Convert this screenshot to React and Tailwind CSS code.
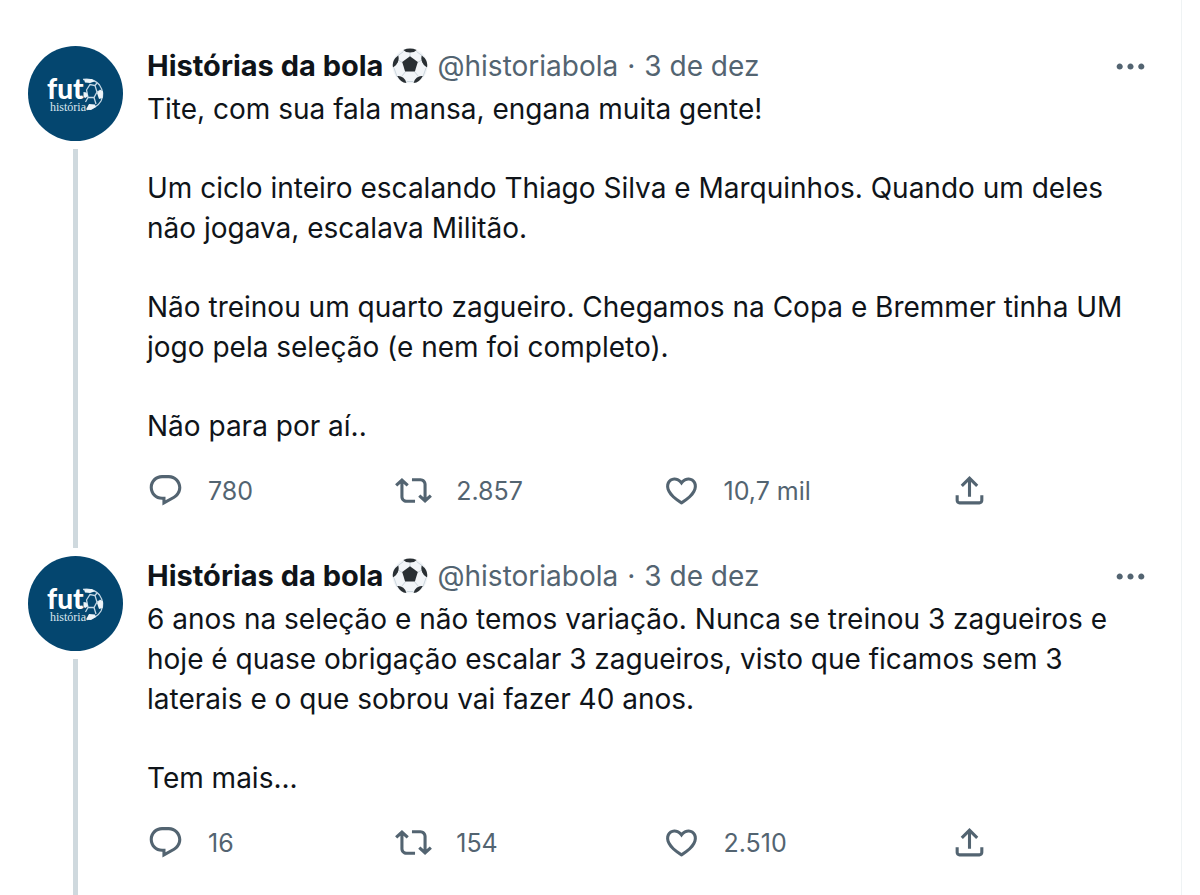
import React from "react";

const posts = [
  {
    id: 1,
    date: "3 de dez",
    text: [
      "Tite, com sua fala mansa, engana muita gente!",
      "Um ciclo inteiro escalando Thiago Silva e Marquinhos. Quando um deles não jogava, escalava Militão.",
      "Não treinou um quarto zagueiro. Chegamos na Copa e Bremmer tinha UM jogo pela seleção (e nem foi completo).",
      "Não para por aí..",
    ],
    replies: "780",
    retweets: "2.857",
    likes: "10,7 mil",
  },
  {
    id: 2,
    date: "3 de dez",
    text: [
      "6 anos na seleção e não temos variação. Nunca se treinou 3 zagueiros e hoje é quase obrigação escalar 3 zagueiros, visto que ficamos sem 3 laterais e o que sobrou vai fazer 40 anos.",
      "Tem mais...",
    ],
    replies: "16",
    retweets: "154",
    likes: "2.510",
  },
];

const icons = {
  reply:
    "M1.751 10c0-4.42 3.584-8 8.005-8h4.366c4.49 0 8.129 3.64 8.129 8.13 0 2.96-1.607 5.68-4.196 7.11l-8.054 4.46v-3.69h-.067c-4.49.1-8.183-3.51-8.183-8.01zm8.005-6c-3.317 0-6.005 2.69-6.005 6 0 3.37 2.77 6.08 6.138 6.01l.351-.01h1.761v2.3l5.087-2.81c1.951-1.08 3.163-3.13 3.163-5.36 0-3.39-2.744-6.13-6.129-6.13H9.756z",
  retweet:
    "M4.5 3.88l4.432 4.14-1.364 1.46L5.5 7.55V16c0 1.1.896 2 2 2H13v2H7.5c-2.209 0-4-1.79-4-4V7.55L1.432 9.48.068 8.02 4.5 3.88zM16.5 6H11V4h5.5c2.209 0 4 1.79 4 4v8.45l2.068-1.93 1.364 1.46-4.432 4.14-4.432-4.14 1.364-1.46 2.068 1.93V8c0-1.1-.896-2-2-2z",
  like: "M16.697 5.5c-1.222-.06-2.679.51-3.89 2.16l-.805 1.09-.806-1.09C9.984 6.01 8.526 5.44 7.304 5.5c-1.243.07-2.349.78-2.91 1.91-.552 1.12-.633 2.78.479 4.82 1.074 1.97 3.257 4.27 7.129 6.61 3.87-2.34 6.052-4.64 7.126-6.61 1.111-2.04 1.03-3.7.477-4.82-.561-1.13-1.666-1.84-2.908-1.91zm4.187 7.69c-1.351 2.48-4.001 5.12-8.379 7.67l-.503.3-.504-.3c-4.379-2.55-7.029-5.19-8.382-7.67-1.36-2.5-1.41-4.86-.514-6.67.887-1.79 2.647-2.91 4.601-3.01 1.651-.09 3.368.56 4.798 2.01 1.429-1.45 3.146-2.1 4.796-2.01 1.954.1 3.714 1.22 4.601 3.01.896 1.81.846 4.17-.514 6.67z",
  share:
    "M12 2.59l5.7 5.7-1.41 1.42L13 6.41V16h-2V6.41l-3.3 3.3-1.41-1.42L12 2.59zM21 15l-.02 3.51c0 1.38-1.12 2.49-2.5 2.49H5.5C4.11 21 3 19.88 3 18.5V15h2v3.5c0 .28.22.5.5.5h12.98c.28 0 .5-.22.5-.5L19 15h2z",
  more: "M3 12c0-1.1.9-2 2-2s2 .9 2 2-.9 2-2 2-2-.9-2-2zm9 2c1.1 0 2-.9 2-2s-.9-2-2-2-2 .9-2 2 .9 2 2 2zm7 0c1.1 0 2-.9 2-2s-.9-2-2-2-2 .9-2 2 .9 2 2 2z",
};

const Icon = ({ name }) => (
  <svg viewBox="0 0 24 24" className="w-[37px] h-[37px] shrink-0 fill-current" aria-hidden="true">
    <path d={icons[name]} />
  </svg>
);

const SoccerBall = () => (
  <svg viewBox="0 0 36 36" className="w-9 h-9 shrink-0" aria-hidden="true">
    <circle cx="18" cy="18" r="17.6" fill="#f2f5f8" />
    <path
      d="M18 9V4M25.5 14.5L30 12M22.7 23.8L26 28M13.3 23.8L10 28M10.5 14.5L6 12M11.5 3.5L5.5 8M24.5 3.5L30.5 8M2 20L5 28.5M34 20L31 28.5M14.5 33.5H21.5"
      stroke="#ccd6dd"
      strokeWidth="1"
      fill="none"
    />
    <g fill="#292f33">
      <path d="M18 8.3L25.8 14.1L22.9 23.6H13.1L10.2 14.1Z" />
      <path d="M11.3 2Q18-.8 24.7 2Q22.5 4.6 18 4.6Q13.5 4.6 11.3 2Z" />
      <path d="M6.2 7.6Q7.3 10.5 5.8 14.3Q4.3 18 1 19.5Q-.5 12.5 6.2 7.6Z" />
      <path d="M29.8 7.6Q28.7 10.5 30.2 14.3Q31.7 18 35 19.5Q36.5 12.5 29.8 7.6Z" />
      <path d="M5.2 28Q8.5 27.4 11.3 29.8Q14.2 32.2 14.4 35.1Q8.5 34.5 5.2 28Z" />
      <path d="M30.8 28Q27.5 27.4 24.7 29.8Q21.8 32.2 21.6 35.1Q27.5 34.5 30.8 28Z" />
    </g>
  </svg>
);

const Avatar = () => (
  <svg viewBox="0 0 95 95" className="w-[95px] h-[95px] shrink-0" role="img" aria-label="fut história">
    <circle cx="47.5" cy="47.5" r="47.5" fill="#04466f" />
    {/* ball next to the wordmark */}
    <g fill="none" stroke="#c5d8e5" strokeWidth="1.3">
      <path d="M55 33.5Q66 32 71.5 39Q77 47 73 55Q69 62 59 63.5" />
      <path d="M58.5 44L62 38.5L67 39.5L69 46L66 51.5H60Z" />
      <path d="M66 51.5L68 58M60 51.5L57.5 56M67 39.5L69 37M69 46L71 45" />
    </g>
    <g fill="#edf4f8">
      <path d="M56 33.5L64 33L66.5 35.5L62 37L57 36.5Z" />
      <path d="M69 47L72 43.5L75 45.5L74.5 52L71 53Z" />
      <path d="M58 63.5L61 58L67 58.5L68 61L63 64Z" />
      <path d="M55.5 46L58.5 46.5L60 50L57.5 52L55.5 51Z" />
    </g>
    <text x="19" y="53" fontFamily="Lato, sans-serif" fontWeight="900" fontSize="28" fill="#fff">
      fut
    </text>
    <text x="22" y="65" fontFamily="Liberation Serif, serif" fontSize="12" fill="#dbe7ef">
      história
    </text>
  </svg>
);

const Action = ({ icon, label, count }) => (
  <button type="button" aria-label={label} className="flex items-center gap-6 text-left cursor-pointer">
    <Icon name={icon} />
    {count && <span className="whitespace-nowrap">{count}</span>}
  </button>
);

const Post = ({ post }) => (
  <article className="flex gap-6 last:grow">
    {/* Avatar and thread line */}
    <div className="flex flex-col items-center gap-2">
      <Avatar />
      <div className="w-[5px] grow bg-[#cfd9de] mb-2" />
    </div>

    <div className="grow min-w-0 pb-[47px]">
      <div className="flex items-center h-10">
        <div className="flex items-center gap-[9px] grow text-[28px] text-[#536471]">
          <span className="flex items-center gap-[9px] text-[29px] font-bold text-[#0f1419]">
            Histórias da bola <SoccerBall />
          </span>
          <a href="#historiabola">@historiabola</a>
          <span>·</span>
          <time>{post.date}</time>
        </div>
        <button type="button" aria-label="Mais" className="text-[#536471] cursor-pointer">
          <Icon name="more" />
        </button>
      </div>

      <div className="mt-[3px] flex flex-col gap-[39px] text-[28px] leading-10 text-[#0f1419]">
        {post.text.map((paragraph, idx) => (
          <p key={idx}>{paragraph}</p>
        ))}
      </div>

      <div className="mt-[26px] grid grid-cols-[248fr_267fr_288fr_198fr] text-[25px] leading-9 text-[#536471]">
        <Action icon="reply" label="Responder" count={post.replies} />
        <Action icon="retweet" label="Retweetar" count={post.retweets} />
        <Action icon="like" label="Curtir" count={post.likes} />
        <Action icon="share" label="Compartilhar" />
      </div>
    </div>
  </article>
);

const App = () => {
  return (
    <div className="min-h-screen bg-white pr-[18px] flex font-['Inter',sans-serif]">
      <main className="grow flex flex-col pt-[46px] pl-7 pr-8 border-r border-[#eff3f4]">
        {posts.map((post) => (
          <Post key={post.id} post={post} />
        ))}
      </main>
    </div>
  );
};

export default App;
